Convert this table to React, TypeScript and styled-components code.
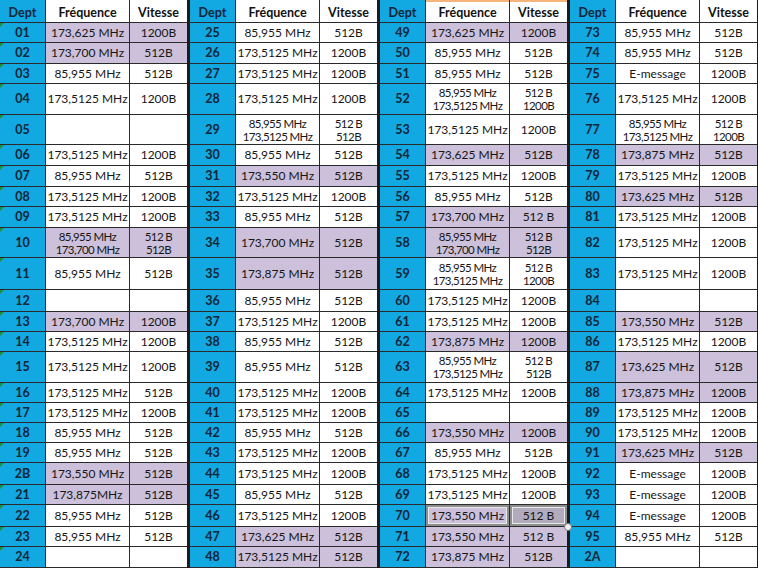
import React from 'react';
import styled, { createGlobalStyle, css } from 'styled-components';

const Global = createGlobalStyle`
  html, body { margin: 0; padding: 0; background: #fff; }
  body {
    font-family: Lato, "Open Sans", "Liberation Sans", sans-serif;
    width: 758px;
    height: 568px;
    overflow: hidden;
  }
`;

const ROWS = [23, 20, 21, 20, 31, 30, 21, 21, 20, 21, 30, 32, 22, 20, 20, 31, 20, 20, 20, 20, 22, 20, 22, 20, 21];

const BLUE = '#12a8e2';
const LAV = '#ccc0da';
const LINE = '#2a2a2a';

const Sheet = styled.div`
  display: flex;
  width: 758px;
  height: 568px;
  overflow: hidden;
  background: #fff;
`;

const Group = styled.div`
  flex: none;
  display: grid;
  grid-template-columns: 46px 84px 57px;
  grid-template-rows: ${ROWS.map((h) => `${h}px`).join(' ')};
  border-right: 3px solid #1c1c1c;
`;

type Kind = 'dept' | 'freq' | 'vit';

const Cell = styled.div<{
  $kind: Kind;
  $lav?: boolean;
  $head?: boolean;
  $flag?: boolean;
  $sel?: boolean;
  $selDark?: boolean;
  $orange?: boolean;
}>`
  position: relative;
  box-sizing: border-box;
  display: flex;
  align-items: center;
  justify-content: center;
  border-bottom: 1px solid ${LINE};
  border-right: ${(p) => (p.$kind === 'vit' ? 'none' : `1px solid ${LINE}`)};
  font-size: 12px;
  line-height: 14px;
  white-space: nowrap;
  color: #161616;
  background: ${(p) => (p.$kind === 'dept' ? BLUE : p.$selDark ? '#b2abbd' : p.$lav ? LAV : '#fff')};
  ${(p) =>
    p.$kind === 'dept' &&
    css`
      color: #0f2538;
      font-weight: 700;
      font-size: 12.5px;
    `}
  ${(p) =>
    p.$head &&
    css`
      font-weight: 700;
      font-size: 12.5px;
      padding-top: 4px;
      color: ${p.$kind === 'dept' ? '#0f2538' : '#111'};
    `}
  ${(p) =>
    p.$orange &&
    css`
      box-shadow: inset 0 2px 0 #f5b47c;
    `}
  ${(p) =>
    p.$sel &&
    css`
      box-shadow: inset 0 0 0 2px #8e8e8e, inset 0 0 0 3px #e9e9e9;
    `}
  ${(p) =>
    p.$flag &&
    css`
      &::before {
        content: '';
        position: absolute;
        top: 0;
        left: 0;
        width: 0;
        height: 0;
        border-top: 4px solid #1f8f3a;
        border-right: 4px solid transparent;
      }
    `}
`;

const Handle = styled.span`
  position: absolute;
  right: -5px;
  bottom: -5px;
  width: 6px;
  height: 6px;
  border-radius: 50%;
  background: #f2f2f2;
  border: 1px solid #7a7a7a;
  z-index: 2;
`;

const Two = styled.div`
  display: flex;
  flex-direction: column;
  align-items: center;
  font-size: 11.5px;
  line-height: 13px;
  letter-spacing: -0.6px;
`;

type Row = { d: string; f: string; v: string; lav?: boolean };
const r = (d: string, f = '', v = '', lav = false): Row => ({ d, f, v, lav });

const A = '173,5125 MHz';
const B = '85,955 MHz';

const g1: Row[] = [
  r('01', '173,625 MHz', '1200B', true),
  r('02', '173,700 MHz', '512B', true),
  r('03', B, '512B'),
  r('04', A, '1200B'),
  r('05'),
  r('06', A, '1200B'),
  r('07', B, '512B'),
  r('08', A, '1200B'),
  r('09', A, '1200B'),
  r('10', '85,955 MHz|173,700 MHz', '512 B|512B', true),
  r('11', B, '512B'),
  r('12'),
  r('13', '173,700 MHz', '1200B', true),
  r('14', A, '1200B'),
  r('15', A, '1200B'),
  r('16', A, '512B'),
  r('17', A, '1200B'),
  r('18', B, '512B'),
  r('19', B, '512B'),
  r('2B', '173,550 MHz', '512B', true),
  r('21', '173,875MHz', '512B', true),
  r('22', B, '512B'),
  r('23', B, '512B'),
  r('24'),
];

const g2: Row[] = [
  r('25', B, '512B'),
  r('26', A, '1200B'),
  r('27', A, '1200B'),
  r('28', A, '1200B'),
  r('29', '85,955 MHz|173,5125 MHz', '512 B|512B'),
  r('30', B, '512B'),
  r('31', '173,550 MHz', '512B', true),
  r('32', A, '1200B'),
  r('33', B, '512B'),
  r('34', '173,700 MHz', '512B', true),
  r('35', '173,875 MHz', '512B', true),
  r('36', B, '512B'),
  r('37', A, '1200B'),
  r('38', B, '512B'),
  r('39', B, '512B'),
  r('40', A, '1200B'),
  r('41', A, '1200B'),
  r('42', B, '512B'),
  r('43', A, '1200B'),
  r('44', A, '1200B'),
  r('45', B, '512B'),
  r('46', A, '1200B'),
  r('47', '173,625 MHz', '512B', true),
  r('48', A, '512B', true),
];

const g3: Row[] = [
  r('49', '173,625 MHz', '1200B', true),
  r('50', B, '512B'),
  r('51', B, '512B'),
  r('52', '85,955 MHz|173,5125 MHz', '512 B|1200B'),
  r('53', A, '1200B'),
  r('54', '173,625 MHz', '512B', true),
  r('55', A, '1200B'),
  r('56', B, '512B'),
  r('57', '173,700 MHz', '512 B', true),
  r('58', '85,955 MHz|173,700 MHz', '512 B|512B', true),
  r('59', '85,955 MHz|173,5125 MHz', '512 B|1200B'),
  r('60', A, '1200B'),
  r('61', A, '1200B'),
  r('62', '173,875 MHz', '1200B', true),
  r('63', '85,955 MHz|173,5125 MHz', '512 B|512B'),
  r('64', A, '1200B'),
  r('65'),
  r('66', '173,550 MHz', '1200B', true),
  r('67', B, '512B'),
  r('68', A, '1200B'),
  r('69', A, '1200B'),
  r('70', '173,550 MHz', '512 B', true),
  r('71', '173,550 MHz', '512 B', true),
  r('72', '173,875 MHz', '512B', true),
];

const g4: Row[] = [
  r('73', B, '512B'),
  r('74', B, '512B'),
  r('75', 'E-message', '1200B'),
  r('76', A, '1200B'),
  r('77', '85,955 MHz|173,5125 MHz', '512 B|1200B'),
  r('78', '173,875 MHz', '512B', true),
  r('79', A, '1200B'),
  r('80', '173,625 MHz', '512B', true),
  r('81', A, '1200B'),
  r('82', A, '1200B'),
  r('83', A, '1200B'),
  r('84'),
  r('85', '173,550 MHz', '512B', true),
  r('86', A, '1200B'),
  r('87', '173,625 MHz', '512B', true),
  r('88', '173,875 MHz', '1200B', true),
  r('89', A, '1200B'),
  r('90', A, '1200B'),
  r('91', '173,625 MHz', '512B', true),
  r('92', 'E-message', '1200B'),
  r('93', 'E-message', '1200B'),
  r('94', 'E-message', '1200B'),
  r('95', B, '512B'),
  r('2A'),
];

const Content: React.FC<{ text: string }> = ({ text }) => {
  if (!text) return null;
  const lines = text.split('|');
  if (lines.length === 1) return <>{text}</>;
  return (
    <Two>
      {lines.map((l, i) => (
        <div key={i}>{l}</div>
      ))}
    </Two>
  );
};

const SheetGroup: React.FC<{ rows: Row[]; index: number }> = ({ rows, index }) => (
  <Group>
    <Cell $kind="dept" $head>Dept</Cell>
    <Cell $kind="freq" $head $orange={index === 2}>Fréquence</Cell>
    <Cell $kind="vit" $head $orange={index === 2}>Vitesse</Cell>
    {rows.map((row) => {
      const sel = row.d === '70';
      return (
        <React.Fragment key={row.d}>
          <Cell $kind="dept" $flag={index === 0}>{row.d}</Cell>
          <Cell $kind="freq" $lav={row.lav} $sel={sel}>
            <Content text={row.f} />
          </Cell>
          <Cell $kind="vit" $lav={row.lav} $sel={sel} $selDark={sel}>
            <Content text={row.v} />
            {sel && <Handle />}
          </Cell>
        </React.Fragment>
      );
    })}
  </Group>
);

export default function App() {
  return (
    <>
      <Global />
      <Sheet>
        {[g1, g2, g3, g4].map((rows, i) => (
          <SheetGroup key={i} rows={rows} index={i} />
        ))}
      </Sheet>
    </>
  );
}
